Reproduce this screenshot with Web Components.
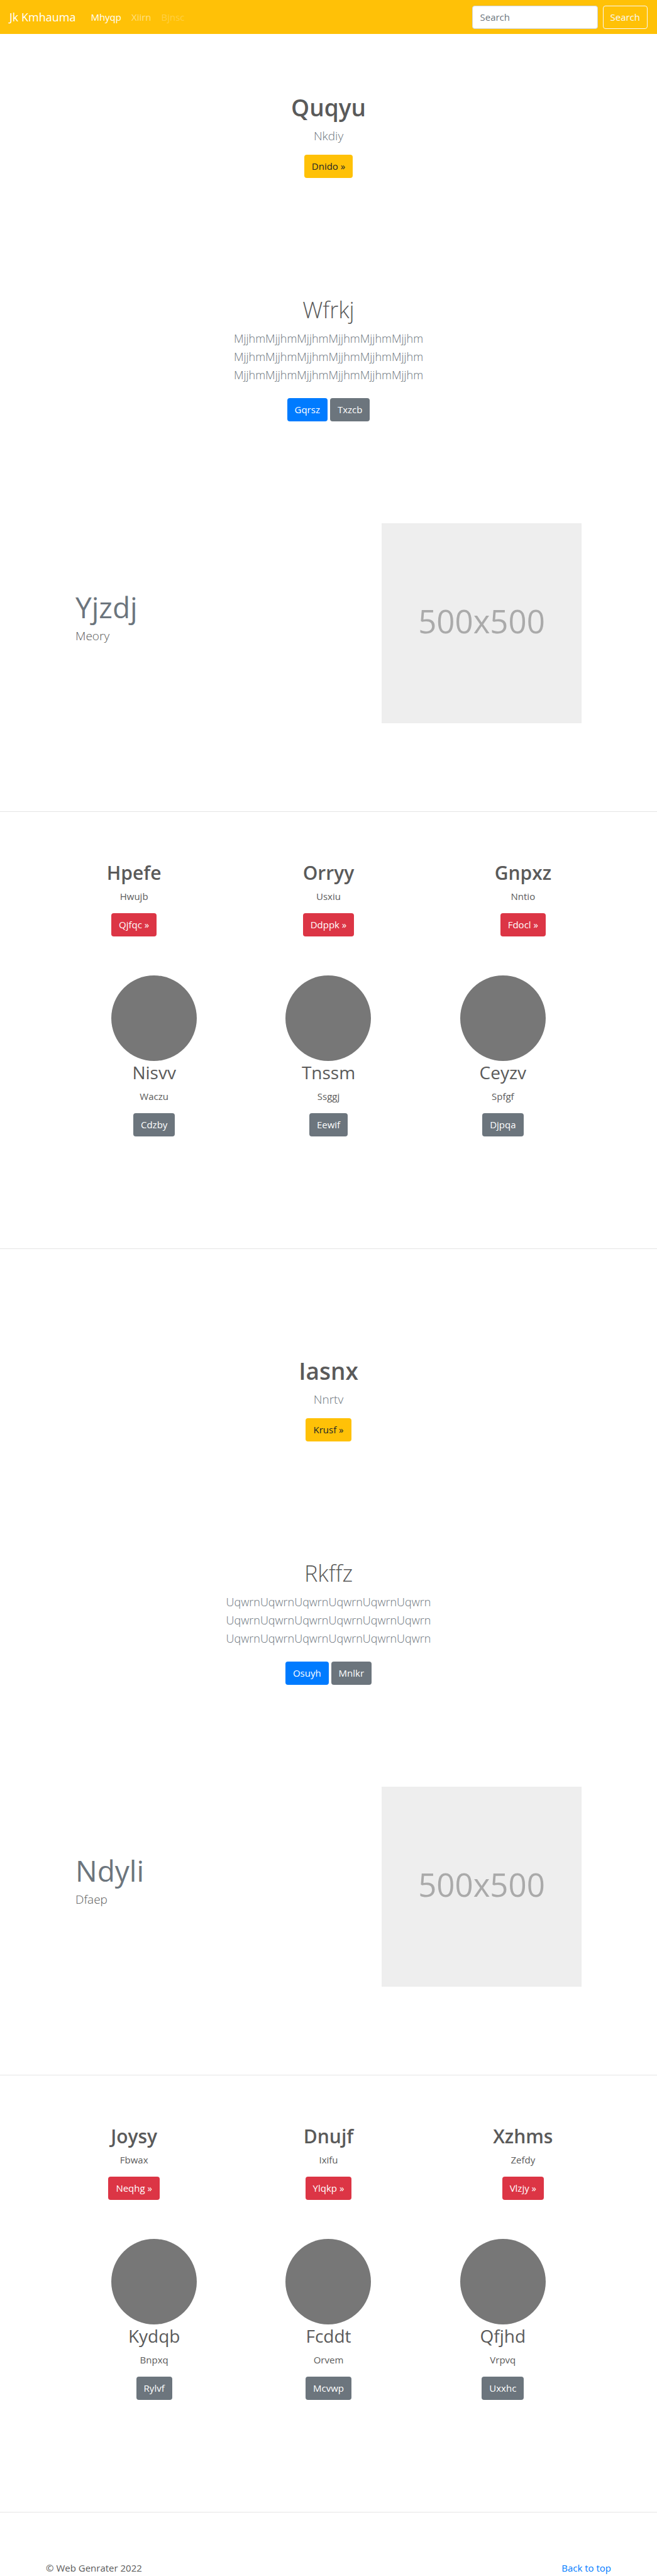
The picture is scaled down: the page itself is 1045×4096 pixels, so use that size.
<!DOCTYPE html>
<html lang="en">
<head>
<meta charset="utf-8">
<meta name="viewport" content="width=device-width, initial-scale=1">
<title>Jk Kmhauma</title>
<style>
  body {
    margin: 0;
    background: #fff;
    color: #5a5a5a;
    font: 400 15px/23px "Open Sans", "Noto Sans", sans-serif;
  }
</style>
</head>
<body>
<site-page></site-page>

<template id="site-nav">
  <style>
    :host { display: block; background: #ffc107; }
    nav { display: flex; align-items: center; min-height: 54px; padding: 0 15px; box-sizing: border-box; }
    a { color: #fff; text-decoration: none; }
    .brand { font-size: 18px; line-height: 28px; margin-right: 16px; }
    ul { display: flex; flex: 1; gap: 16px; margin: 0; padding: 0 8px; list-style: none; }
    .muted { color: rgba(255, 255, 255, .5); }
    .disabled { color: rgba(255, 255, 255, .25); }
    form { display: flex; gap: 8px; }
    input, button {
      box-sizing: border-box; height: 37px; margin: 0; border: 1px solid #ced4da;
      border-radius: 4px; font: inherit;
    }
    input { width: 200px; padding: 6px 12px; background: #fff; color: #495057; }
    input::placeholder { color: #6c757d; opacity: 1; }
    button { padding: 6px 11px; background: transparent; border-color: #f8f9fa; color: #f8f9fa; line-height: 23px; }
  </style>
  <nav>
    <a class="brand" href="#">Jk Kmhauma</a>
    <ul>
      <li><a href="#">Mhyqp</a></li>
      <li><a class="muted" href="#">Xiirn</a></li>
      <li><a class="disabled" href="#" aria-disabled="true">Bjnsc</a></li>
    </ul>
    <form role="search">
      <input type="search" placeholder="Search" aria-label="Search">
      <button type="button">Search</button>
    </form>
  </nav>
</template>

<template id="action-link">
  <style>
    :host { display: inline-block; }
    a {
      display: block; padding: 6px 11px; border: 1px solid transparent; border-radius: 4px;
      background: #6c757d; color: #fff; text-decoration: none; line-height: 23px;
    }
    :host([kind="warning"]) a { background: #ffc107; color: #212529; }
    :host([kind="primary"]) a { background: #007bff; }
    :host([kind="danger"]) a { background: #dc3545; }
  </style>
  <a href="#"><slot></slot></a>
</template>

<template id="hero-block">
  <style>
    :host { display: block; text-align: center; }
    h1 { margin: 0 0 8px; font-size: 37px; line-height: 46px; font-weight: 600; }
    p { margin: 0 0 15px; font-size: 19px; line-height: 29px; font-weight: 300; color: #6c757d; }
    :host([light]) h1 { font-size: 36px; font-weight: 300; }
    :host([light]) p { margin-bottom: 22px; font-size: 18px; }
    .actions { display: flex; justify-content: center; gap: 4px; }
  </style>
  <h1><slot name="title"></slot></h1>
  <p><slot></slot></p>
  <div class="actions"><slot name="action"></slot></div>
</template>

<template id="feature-row">
  <style>
    :host { display: flex; justify-content: space-between; align-items: center; padding: 0 120px; }
    .copy { padding-bottom: 18px; }
    h2 { margin: 0 0 4px; font-size: 46px; line-height: 55px; font-weight: 400; color: #6c757d; }
    p { margin: 0; font-size: 19px; line-height: 29px; font-weight: 300; }
    svg { display: block; width: 318px; height: 318px; }
    text { font-size: 51px; fill: #aaa; text-anchor: middle; }
  </style>
  <div class="copy">
    <h2><slot name="title"></slot></h2>
    <p><slot></slot></p>
  </div>
  <svg viewBox="0 0 318 318" role="img" aria-label="500x500">
    <rect width="318" height="318" fill="#eee"/>
    <text x="159" y="175">500x500</text>
  </svg>
</template>

<template id="info-card">
  <style>
    :host { display: flex; flex-direction: column; align-items: center; text-align: center; }
    svg { display: none; width: 136px; height: 136px; }
    h2 { margin: 0 0 8px; font-size: 30px; line-height: 37px; font-weight: 600; }
    p { margin: 0 0 15px; }
    :host([round]) svg { display: block; }
    :host([round]) h2 { font-size: 28px; font-weight: 400; }
  </style>
  <svg viewBox="0 0 136 136" aria-hidden="true"><circle cx="68" cy="68" r="68" fill="#777"/></svg>
  <h2><slot name="title"></slot></h2>
  <p><slot></slot></p>
  <slot name="action"></slot>
</template>

<template id="card-row">
  <style>
    :host { display: grid; grid-template-columns: repeat(3, 1fr); max-width: 928px; margin: 0 auto; }
    :host([narrow]) { max-width: 832px; }
  </style>
  <slot></slot>
</template>

<template id="site-footer">
  <style>
    :host { display: flex; justify-content: space-between; padding: 77px 73px 1px; }
    p { margin: 0; }
    a { color: #007bff; text-decoration: none; }
  </style>
  <p>© Web Genrater 2022</p>
  <p><a href="#">Back to top</a></p>
</template>

<template id="content-group">
  <style>
    :host { display: block; }
    .heroes { display: flex; flex-direction: column; gap: 187px; padding: 94px 0 162px; }
    .cards { display: flex; flex-direction: column; gap: 62px; padding: 78px 0 178px; }
    .feature { padding-bottom: 140px; }
    .cards ::slotted(*) { width: 100%; }
    hr { margin: 0; border: 0; border-top: 1px solid #e5e5e5; }
  </style>
  <div class="heroes"><slot name="hero"></slot></div>
  <div class="feature"><slot name="feature"></slot></div>
  <hr>
  <div class="cards"><slot name="cards"></slot></div>
  <hr>
</template>

<template id="site-page">
  <style>
    :host { display: block; }
    content-group + content-group { margin-top: 77px; }
  </style>
  <site-nav></site-nav>
  <main>
    <content-group>
      <hero-block slot="hero">
        <span slot="title">Quqyu</span>Nkdiy
        <action-link slot="action" kind="warning">Dnido »</action-link>
      </hero-block>
      <hero-block slot="hero" light>
        <span slot="title">Wfrkj</span>MjjhmMjjhmMjjhmMjjhmMjjhmMjjhm<br>MjjhmMjjhmMjjhmMjjhmMjjhmMjjhm<br>MjjhmMjjhmMjjhmMjjhmMjjhmMjjhm
        <action-link slot="action" kind="primary">Gqrsz</action-link>
        <action-link slot="action">Txzcb</action-link>
      </hero-block>
      <feature-row slot="feature"><span slot="title">Yjzdj</span>Meory</feature-row>
      <card-row slot="cards">
        <info-card><span slot="title">Hpefe</span>Hwujb<action-link slot="action" kind="danger">Qjfqc »</action-link></info-card>
        <info-card><span slot="title">Orryy</span>Usxiu<action-link slot="action" kind="danger">Ddppk »</action-link></info-card>
        <info-card><span slot="title">Gnpxz</span>Nntio<action-link slot="action" kind="danger">Fdocl »</action-link></info-card>
      </card-row>
      <card-row slot="cards" narrow>
        <info-card round><span slot="title">Nisvv</span>Waczu<action-link slot="action">Cdzby</action-link></info-card>
        <info-card round><span slot="title">Tnssm</span>Ssggj<action-link slot="action">Eewif</action-link></info-card>
        <info-card round><span slot="title">Ceyzv</span>Spfgf<action-link slot="action">Djpqa</action-link></info-card>
      </card-row>
    </content-group>
    <content-group>
      <hero-block slot="hero">
        <span slot="title">Iasnx</span>Nnrtv
        <action-link slot="action" kind="warning">Krusf »</action-link>
      </hero-block>
      <hero-block slot="hero" light>
        <span slot="title">Rkffz</span>UqwrnUqwrnUqwrnUqwrnUqwrnUqwrn<br>UqwrnUqwrnUqwrnUqwrnUqwrnUqwrn<br>UqwrnUqwrnUqwrnUqwrnUqwrnUqwrn
        <action-link slot="action" kind="primary">Osuyh</action-link>
        <action-link slot="action">Mnlkr</action-link>
      </hero-block>
      <feature-row slot="feature"><span slot="title">Ndyli</span>Dfaep</feature-row>
      <card-row slot="cards">
        <info-card><span slot="title">Joysy</span>Fbwax<action-link slot="action" kind="danger">Neqhg »</action-link></info-card>
        <info-card><span slot="title">Dnujf</span>Ixifu<action-link slot="action" kind="danger">Ylqkp »</action-link></info-card>
        <info-card><span slot="title">Xzhms</span>Zefdy<action-link slot="action" kind="danger">Vlzjy »</action-link></info-card>
      </card-row>
      <card-row slot="cards" narrow>
        <info-card round><span slot="title">Kydqb</span>Bnpxq<action-link slot="action">Rylvf</action-link></info-card>
        <info-card round><span slot="title">Fcddt</span>Orvem<action-link slot="action">Mcvwp</action-link></info-card>
        <info-card round><span slot="title">Qfjhd</span>Vrpvq<action-link slot="action">Uxxhc</action-link></info-card>
      </card-row>
    </content-group>
  </main>
  <site-footer></site-footer>
</template>

<script>
  // Each element's shadow root is cloned from the template that carries its name.
  for (const name of ['action-link', 'hero-block', 'feature-row', 'info-card', 'card-row',
                      'content-group', 'site-nav', 'site-footer', 'site-page']) {
    customElements.define(name, class extends HTMLElement {
      constructor() {
        super();
        this.attachShadow({ mode: 'open' })
            .append(document.getElementById(name).content.cloneNode(true));
      }
    });
  }
</script>
</body>
</html>
